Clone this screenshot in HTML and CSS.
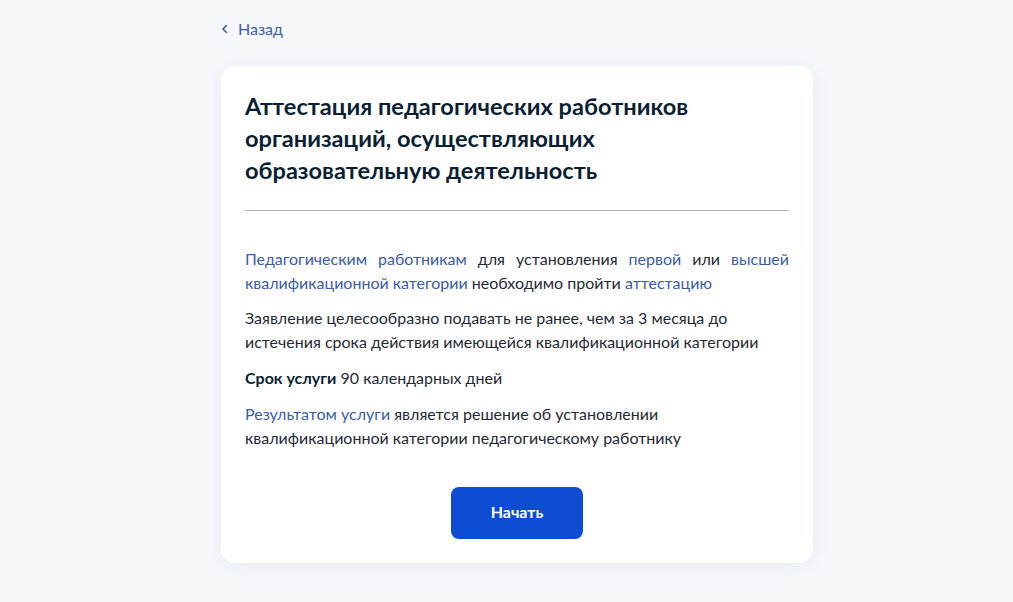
FILE: index.html
```html
<!DOCTYPE html>
<html lang="ru">
<head>
  <meta charset="UTF-8" />
  <meta name="viewport" content="width=device-width, initial-scale=1.0"/>
  <title>Аттестация педагогических работников</title>
  <link rel="stylesheet" href="styles.css">
</head>
<body>

<div class="page">
  <a class="back" href="#">
    <svg class="back-icon" width="8" height="12" viewBox="0 0 8 12">
      <path d="M5.5 2.5L2 6l3.5 3.5" fill="none" stroke="currentColor" stroke-width="1.6" stroke-linecap="round" stroke-linejoin="round"/>
    </svg>
    Назад
  </a>

  <div class="card">
    <h1>Аттестация педагогических работников организаций, осуществляющих образовательную деятельность</h1>
    <hr class="divider">

    <p class="justify">
      <a href="#">Педагогическим работникам</a> для установления <a href="#">первой</a> или <a href="#">высшей квалификационной категории</a> необходимо пройти <a href="#">аттестацию</a>
    </p>
    <p>Заявление целесообразно подавать не ранее, чем за 3 месяца до<br>истечения срока действия имеющейся квалификационной категории</p>
    <p><b>Срок услуги</b> 90 календарных дней</p>
    <p><a href="#">Результатом услуги</a> является решение об установлении<br>квалификационной категории педагогическому работнику</p>

    <div class="actions">
      <button class="btn">Начать</button>
    </div>
  </div>
</div>

</body>
</html>
```

FILE: styles.css
```css
body {
  margin: 0;
  background: #f5f7fb;
  font-family: Lato, "Liberation Sans", sans-serif;
  color: #0b1f33;
}
.page {
  width: 592px;
  margin: 0 auto;
  padding: 17px 0 40px 21px;
}
a { color: #3b5ca6; text-decoration: none; }

.back {
  display: inline-flex;
  align-items: center;
  gap: 9px;
  font-size: 16px;
  line-height: 24px;
  margin-bottom: 25px;
}

.card {
  background: #fff;
  border-radius: 14px;
  padding: 24px;
  box-shadow: 0 2px 20px rgba(70, 90, 130, 0.08);
}
h1 {
  margin: 0;
  font-size: 23.6px;
  line-height: 32px;
  font-weight: 700;
  color: #0b1f33;
}
.divider {
  border: 0;
  border-top: 1px solid #a9b6c8;
  margin: 24px 0 36px;
}
.card p {
  margin: 0 0 12px;
  font-size: 16px;
  line-height: 24px;
  color: #1f2a36;
}
.card p:nth-of-type(2) { margin-top: -1px; }
.card p.justify { text-align: justify; }
.card p b { font-weight: 700; color: #0b1f33; }

.actions {
  display: flex;
  justify-content: center;
  margin-top: 37px;
}
.btn {
  width: 132px;
  height: 52px;
  padding: 0 0 4px;
  border: 0;
  border-radius: 8px;
  background: #0d4cd3;
  color: #fff;
  font-family: inherit;
  font-size: 16px;
  font-weight: 700;
  cursor: pointer;
}
```
